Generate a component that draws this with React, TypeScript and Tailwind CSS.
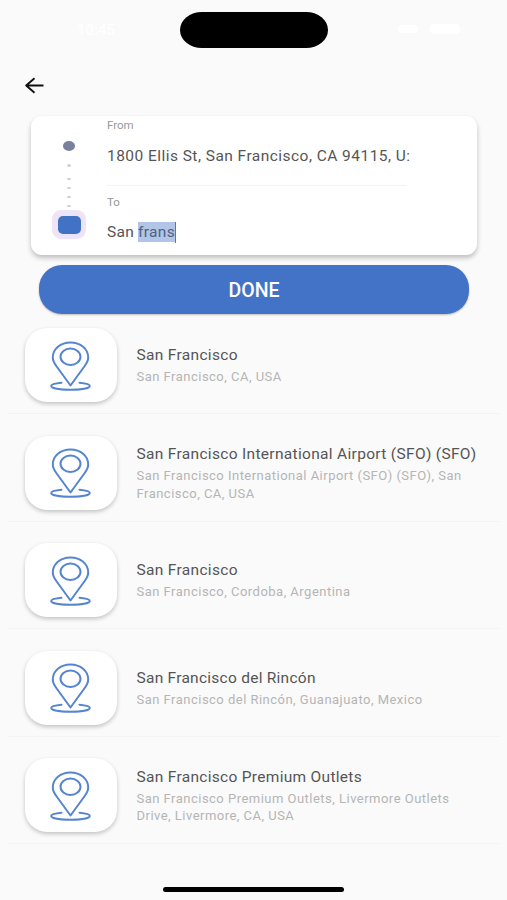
const places = [
  { title: 'San Francisco', tracking: 'tracking-[0.32px]', lines: ['San Francisco, CA, USA'] },
  {
    title: 'San Francisco International Airport (SFO) (SFO)',
    tracking: 'tracking-[0.32px]',
    lines: ['San Francisco International Airport (SFO) (SFO), San', 'Francisco, CA, USA'],
  },
  { title: 'San Francisco', tracking: 'tracking-[0.32px]', lines: ['San Francisco, Cordoba, Argentina'] },
  {
    title: 'San Francisco del Rincón',
    tracking: 'tracking-[0.26px]',
    lines: ['San Francisco del Rincón, Guanajuato, Mexico'],
  },
  {
    title: 'San Francisco Premium Outlets',
    tracking: 'tracking-[0.3px]',
    lines: ['San Francisco Premium Outlets, Livermore Outlets', 'Drive, Livermore, CA, USA'],
  },
];

function PinIcon() {
  return (
    <svg className="mt-px" width="42" height="52" viewBox="0 0 42 52" fill="none" stroke="#5585cf" strokeWidth="2" strokeLinecap="round" strokeLinejoin="round">
      <path d="M20.500 45.500L6.300 26C4 22.800 2.800 20.500 2.800 17.500C2.800 9 10.500 2.500 20.500 2.500C30.500 2.500 38.200 9 38.200 17.500C38.200 20.500 37 22.800 34.700 26Z" />
      <ellipse cx="20.500" cy="16.700" rx="10" ry="8.200" />
      <path d="M11.500 42.700C4.500 43.300 1.200 44.400 1.200 46C1.200 48.300 10 49.800 20.500 49.800C31 49.800 39.800 48.300 39.800 46C39.800 44.400 36.500 43.300 29.500 42.700" />
    </svg>
  );
}

function StatusBar() {
  return (
    <div className="flex h-[47.500px] items-end justify-between pt-3 pr-[47px] pl-[77px]">
      <span className="mb-2 w-[42px] text-[15px] leading-5 font-medium text-white">10:45</span>
      <div className="mr-[10px] h-[35.500px] w-[148px] rounded-[22px/18px] bg-black" />
      <div className="mb-[14px] flex w-[62px] items-center gap-3">
        <div className="h-[8px] w-[20px] rounded bg-white" />
        <div className="h-[10px] w-[30px] rounded bg-white" />
      </div>
    </div>
  );
}

function RouteMarker() {
  return (
    <div className="flex w-[34px] flex-col items-center pt-[25px]">
      <div className="h-[10px] w-[12px] rounded-[50%] bg-[#77809d]" />
      <div className="mt-[13px] flex flex-col items-center gap-[7px]">
        <i className="mb-[4px] h-[3px] w-[4px] rounded-[50%] bg-[#d2d2d2]" />
        <i className="h-[2px] w-[4px] rounded-full bg-[#d2d2d2]" />
        <i className="h-[2px] w-[4px] rounded-full bg-[#d2d2d2]" />
        <i className="h-[2px] w-[4px] rounded-full bg-[#d2d2d2]" />
        <i className="h-[2px] w-[4px] rounded-full bg-[#d2d2d2]" />
      </div>
      <div className="mt-[3px] flex h-[29px] w-[34px] items-center justify-center rounded-[9px] bg-[#efe3f8]">
        <div className="h-[18px] w-[23px] rounded-[5px] bg-[#4272c4]" />
      </div>
    </div>
  );
}

export default function App() {
  return (
    <main className="flex h-[900px] w-[507px] flex-col overflow-hidden bg-[#fafafa] font-[Roboto,sans-serif]">
      <StatusBar />
      <header className="flex h-[68.500px] pt-[29.500px] pl-[25px]">
        <svg width="20" height="18" viewBox="0 0 20 18" fill="none" stroke="#111" strokeWidth="1.900" strokeLinejoin="round">
          <path d="M18.500 8.500H1.500M9.500 1.300L1.200 8.500L9.500 15.700" />
        </svg>
      </header>

      <section className="mx-[31px] flex h-[139px] w-[446px] shrink-0 rounded-[11px] bg-white pl-[21px] shadow-[0_3px_5px_rgba(0,0,0,0.24)]">
        <RouteMarker />
        <div className="ml-[21px] flex w-[306px] flex-col">
          <label className="mt-[2px] h-[14px] text-[11.500px] leading-[14px] text-[#999]">From</label>
          <div className="mt-[14px] h-[20px] text-[15.500px] leading-[20px] tracking-[0.46px] whitespace-nowrap text-[#555]">
            1800 Ellis St, San Francisco, CA 94115, U:
          </div>
          <div className="mt-[19px] h-px w-[300px] bg-[#f4f4f4]" />
          <label className="mt-[9px] h-[14px] text-[11.500px] leading-[14px] text-[#999]">To</label>
          <div className="mt-[13px] flex h-[20px] items-center text-[15.500px] leading-[21px] tracking-[0.3px] text-[#555]">
            <span className="mr-[4px]">San</span>
            <span className="h-[20px] bg-[#b1c5e6] text-[#50617f]">frans</span>
            <span className="h-[21px] w-px bg-[#68758c]" />
          </div>
        </div>
      </section>

      <button className="mx-[39px] mt-[9.500px] h-[49px] w-[430px] shrink-0 rounded-[23px] bg-[#4373c6] pt-px text-[19.500px] leading-[49px] font-medium text-white shadow-[0_1px_2px_rgba(0,0,0,0.25)]">
        DONE
      </button>

      <ul className="mx-[8px] mt-[14.500px] flex flex-col gap-[21.500px]">
        {places.map((place, i) => (
          <li key={i} className="flex h-[86px] shrink-0 border-b border-[#f3f3f3] pl-[17px]">
            <div className="flex h-[74px] w-[92px] shrink-0 items-center justify-center rounded-[22px] bg-white shadow-[0_2px_4px_rgba(0,0,0,0.22)]">
              <PinIcon />
            </div>
            <div className="ml-[19.500px] flex h-[75px] flex-col justify-center whitespace-nowrap">
              <h2 className={`text-[15.500px] leading-[20px] text-[#555] ${place.tracking}`}>{place.title}</h2>
              <div className="mt-[3px] text-[13px] leading-[17.500px] tracking-[0.48px] text-[#b5b5b5]">
                {place.lines.map((line) => (
                  <p key={line}>{line}</p>
                ))}
              </div>
            </div>
          </li>
        ))}
      </ul>

      <div className="mx-auto mt-auto mb-[8px] h-[5px] w-[181px] shrink-0 rounded-full bg-black" />
    </main>
  );
}
